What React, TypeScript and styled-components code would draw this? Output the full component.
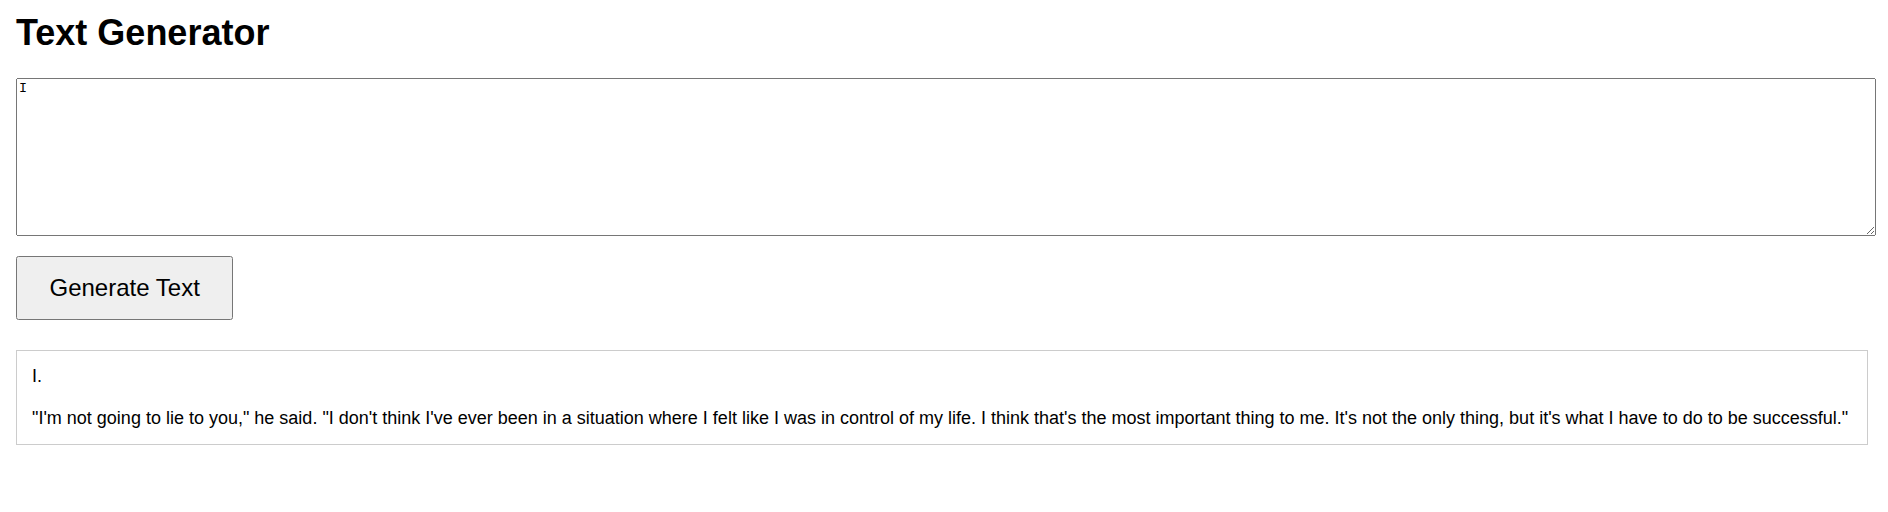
import React, { useState } from "react";
import styled, { createGlobalStyle } from "styled-components";

const GlobalStyle = createGlobalStyle`
  html, body {
    margin: 0;
    padding: 0;
    background: #ffffff;
  }
  body {
    font-family: "Liberation Sans", Arial, sans-serif;
    font-size: 18px;
    color: #000000;
  }
`;

const Page = styled.div`
  display: flex;
  flex-direction: column;
  align-items: flex-start;
  padding: 12px 12px 0 16px;
`;

const Title = styled.h1`
  margin: 0 0 24px;
  font-size: 36px;
  font-weight: bold;
  font-family: "Liberation Sans", Arial, sans-serif;
`;

const Prompt = styled.textarea`
  display: block;
  box-sizing: border-box;
  width: 100%;
  height: 158px;
  margin: 0 0 20px;
  font-family: "Liberation Mono", "Courier New", monospace;
  font-size: 13.333px;
`;

const GenerateButton = styled.button`
  box-sizing: border-box;
  height: 64px;
  padding: 0 31.5px;
  margin: 0 0 30px;
  font-family: "Liberation Sans", Arial, sans-serif;
  font-size: 24px;
  color: #000000;
`;

const Output = styled.div`
  box-sizing: border-box;
  align-self: stretch;
  margin-right: 8px;
  padding: 15px;
  border: 1px solid #cccccc;
  font-size: 18px;
  white-space: pre-wrap;
`;

const generated =
  'I.\n\n"I\'m not going to lie to you," he said. "I don\'t think I\'ve ever been in a situation where I felt like I was in control of my life. I think that\'s the most important thing to me. It\'s not the only thing, but it\'s what I have to do to be successful."';

export default function App() {
  const [prompt, setPrompt] = useState("I");
  return (
    <>
      <GlobalStyle />
      <Page>
        <Title>Text Generator</Title>
        <Prompt value={prompt} onChange={(e) => setPrompt(e.target.value)} />
        <GenerateButton type="button">Generate Text</GenerateButton>
        <Output>{generated}</Output>
      </Page>
    </>
  );
}
